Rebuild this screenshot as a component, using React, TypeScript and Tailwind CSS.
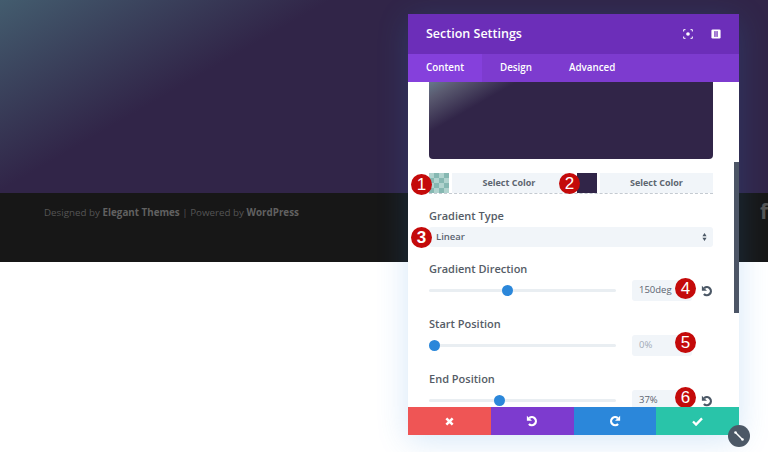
import React from "react";

const font = { fontFamily: '"Open Sans", "Noto Sans", sans-serif' };

function Badge({ n, className }: { n: number; className: string }) {
  return (
    <span
      className={`absolute flex h-[21px] w-[21px] items-center justify-center rounded-full bg-[#c40a0a] text-[17px] leading-none text-white ${className}`}
      style={{ fontFamily: '"Liberation Sans", sans-serif' }}
    >
      {n}
    </span>
  );
}

function Undo({ className }: { className?: string }) {
  return (
    <svg viewBox="0 0 14 14" className={className} fill="none" stroke="currentColor" strokeWidth="2.6">
      <path d="M3.800 3.600A4.700 4.700 0 1 1 3.400 10.400" />
      <path d="M1 .8v6h6z" fill="currentColor" stroke="none" />
    </svg>
  );
}

function Redo({ className }: { className?: string }) {
  return (
    <svg viewBox="0 0 14 14" className={className} fill="none" stroke="currentColor" strokeWidth="2.6">
      <path d="M10.200 3.600A4.700 4.700 0 1 0 10.600 10.400" />
      <path d="M13 .8v6H7z" fill="currentColor" stroke="none" />
    </svg>
  );
}

function Slider({ left, value, muted, reset, badge, label, pos }: { left: string; value: string; muted?: boolean; reset?: boolean; badge: number; label: string; pos: string }) {
  return (
    <div className="shrink-0">
      <div className="text-[11px] font-semibold leading-[15px] text-[#555c66]">{label}</div>
      <div className="relative mt-[4px] flex h-[21px] items-center">
        <div className="relative h-[3px] w-[187px] rounded bg-[#e9eef2]">
          <span className={`absolute top-[-4px] h-[11px] w-[11px] rounded-full bg-[#2b87da] ${pos}`} />
        </div>
        <div className={`ml-[16px] flex h-[21px] w-[60px] items-center rounded-[3px] bg-[#f1f5f9] pl-[7px] text-[9.500px] ${muted ? "text-[#a3acb8]" : "text-[#5b6470]"}`}>
          {value}
        </div>
        {reset && <Undo className="ml-[9px] h-[12px] w-[12px] text-[#4c5866]" />}
        <Badge n={badge} className={left} />
      </div>
    </div>
  );
}

function ColorRow() {
  return (
    <div className="relative mt-[14px] flex h-[21px] border-b border-dashed border-[#c4cad1]">
      <div
        className="h-[20px] w-[20px] shrink-0"
        style={{ backgroundColor: "#9cc9c3", backgroundImage: "conic-gradient(#86b8b2 25%, #b0d3ce 0 50%, #86b8b2 0 75%, #b0d3ce 0)", backgroundSize: "10px 10px" }}
      />
      <div className="ml-[3px] flex h-[20px] w-[114px] items-center justify-center bg-[#f1f5f9] text-[9px] font-bold text-[#5d6570]">Select Color</div>
      <div className="ml-[11px] h-[20px] w-[20px] shrink-0 bg-[#312548]" />
      <div className="ml-[3px] flex h-[20px] flex-1 items-center justify-center bg-[#f1f5f9] text-[9px] font-bold text-[#5d6570]">Select Color</div>
      <Badge n={1} className="left-[-18px] top-[1px]" />
      <Badge n={2} className="left-[130px] top-0" />
    </div>
  );
}

export default function App() {
  return (
    <div className="relative h-[452px] w-[768px] overflow-hidden bg-white" style={font}>
      <div className="h-[193px] bg-[linear-gradient(150deg,#435c6e_0%,#312548_30%)]" />
      <div className="relative h-[69px] bg-[#171717] pl-[44px] pt-[12px] text-[9.800px] leading-[15px] text-[#555555]">
        Designed by <b className="font-bold text-[#616161]">Elegant Themes</b> | Powered by <b className="font-bold text-[#616161]">WordPress</b>
        <span className="absolute left-[760px] top-[4px] text-[21px] font-bold leading-[28px] text-[#555]">f</span>
      </div>

      <div className="absolute left-[408px] top-[14px] flex h-[421px] w-[331px] flex-col bg-white shadow-[0_5px_30px_rgba(43,135,218,0.2)]">
        <div className="flex h-[40px] shrink-0 items-center bg-[#6c2eb9] pl-[18px] pr-[18px] text-white">
          <span className="pt-[1px] text-[12.500px] font-semibold">Section Settings</span>
          <svg viewBox="0 0 12 12" className="ml-auto h-[10px] w-[10px]" fill="none" stroke="#fff" strokeWidth="1.200">
            <path d="M.8 3V.8H3M9 .8h2.200V3M11.200 9v2.200H9M3 11.200H.8V9" />
            <circle cx="6" cy="6" r="2.200" fill="#fff" stroke="none" />
          </svg>
          <svg viewBox="0 0 12 12" className="ml-[18px] h-[10px] w-[10px]" fill="none">
            <rect x="0.500" y="0.500" width="11" height="11" rx="1.500" fill="#fff" />
            <rect x="4" y="2.500" width="1.500" height="7" fill="#6c2eb9" />
            <rect x="6.500" y="2.500" width="1.500" height="7" fill="#6c2eb9" />
          </svg>
        </div>
        <div className="flex h-[28px] shrink-0 items-center bg-[#7d3bcf] text-[9.800px] font-semibold text-white">
          <span className="flex h-full w-[74px] items-center bg-[#8540dc] pl-[18px]">Content</span>
          <span className="ml-[18px]">Design</span>
          <span className="ml-[37px]">Advanced</span>
        </div>
        <div className="relative min-h-0 flex-1 overflow-hidden pl-[21px] pr-[26px]">
          <div className="h-[77px] rounded-b-[4px] bg-[linear-gradient(150deg,#66788a_0%,#5a5a70_7%,#312548_21%)]" />
          <ColorRow />
          <div className="mt-[14px] text-[11px] font-semibold leading-[15px] text-[#555c66]">Gradient Type</div>
          <div className="relative mt-[4px] flex h-[20px] items-center rounded-[3px] bg-[#f1f5f9] pl-[7px] pr-[6px] text-[9.500px] font-semibold text-[#5b6470]">
            Linear
            <svg viewBox="0 0 6 10" className="ml-auto h-[8px] w-[5px]" fill="#4c5866">
              <path d="M3 0l2.600 4H.4zM3 10L.4 6h5.200z" />
            </svg>
            <Badge n={3} className="left-[-18px] top-0" />
          </div>
          <div className="mt-[14px]">
            <Slider label="Gradient Direction" value="150deg" reset badge={4} left="left-[246px] top-[-2px]" pos="left-[73px]" />
          </div>
          <div className="mt-[15px]">
            <Slider label="Start Position" value="0%" muted badge={5} left="left-[246px] top-[-3px]" pos="left-0" />
          </div>
          <div className="mt-[15px]">
            <Slider label="End Position" value="37%" reset badge={6} left="left-[246px] top-[-3px]" pos="left-[65px]" />
          </div>
          <div className="absolute right-0 top-[80px] h-[151px] w-[5px] bg-[#4c5566]" />
        </div>
        <div className="flex h-[28px] shrink-0 text-white">
          <div className="flex flex-1 items-center justify-center bg-[#ef5555]">
            <svg viewBox="0 0 10 10" className="h-[9px] w-[9px]" stroke="#fff" strokeWidth="2.800"><path d="M1.500 1.500l7 7M8.500 1.500l-7 7" /></svg>
          </div>
          <div className="flex flex-1 items-center justify-center bg-[#7d3bcf]"><Undo className="h-[12px] w-[12px]" /></div>
          <div className="flex flex-1 items-center justify-center bg-[#2b87da]"><Redo className="h-[12px] w-[12px]" /></div>
          <div className="flex flex-1 items-center justify-center bg-[#29c4a9]">
            <svg viewBox="0 0 12 10" className="h-[9px] w-[11px]" fill="none" stroke="#fff" strokeWidth="2.600"><path d="M1 5l3.400 3.400L11 1.500" /></svg>
          </div>
        </div>
      </div>

      <div className="absolute left-[728px] top-[425px] flex h-[22px] w-[22px] items-center justify-center rounded-full bg-[#4c5866]">
        <svg viewBox="0 0 12 12" className="h-[12px] w-[12px]" stroke="#fff" strokeWidth="1.500" fill="#fff">
          <path d="M2.500 2.500l7 7" />
          <circle cx="2.500" cy="2.500" r="1.300" stroke="none" />
          <circle cx="9.500" cy="9.500" r="1.300" stroke="none" />
        </svg>
      </div>
    </div>
  );
}
